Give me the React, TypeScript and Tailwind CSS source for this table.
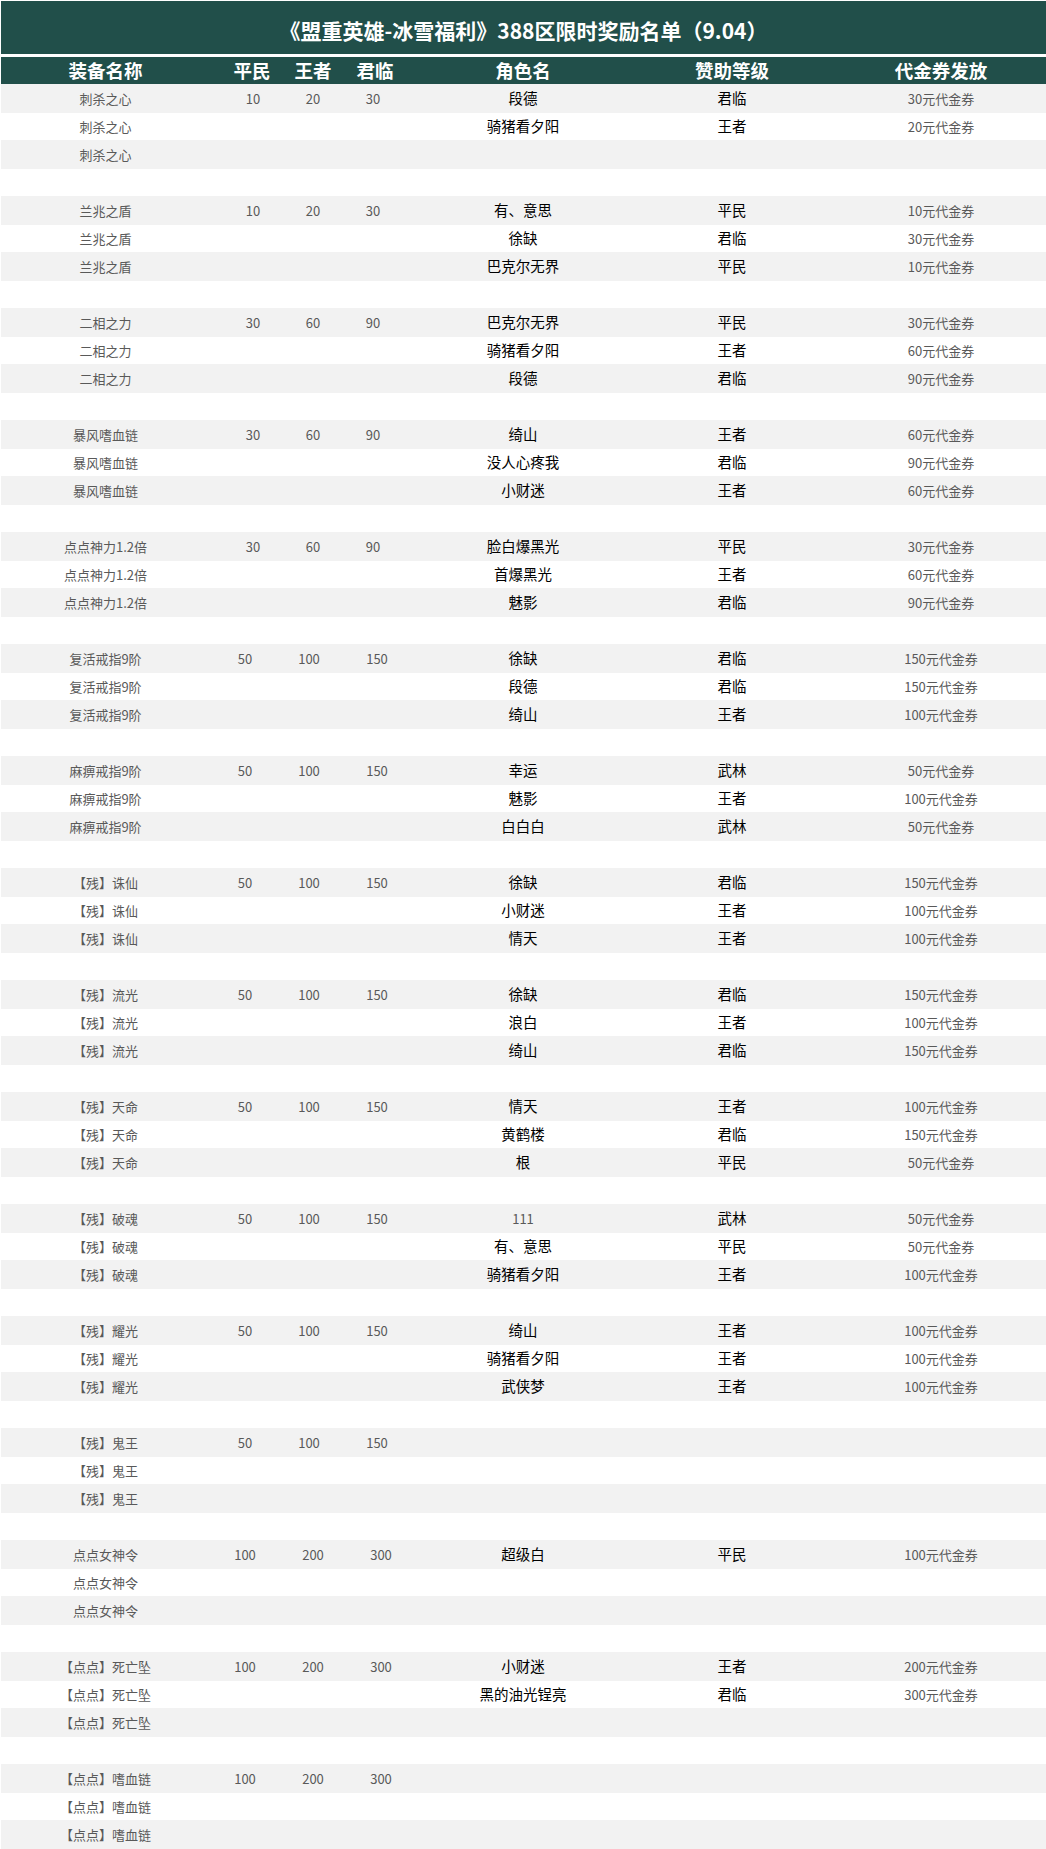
import React from "react";

type NumType = "a" | "b" | "c";
type Row = { item: string; nums?: [string, string, string]; numType?: NumType; name?: string; level?: string; voucher?: string };
type Group = { item: string; nums: [string, string, string]; numType: NumType; rows: [string, string, string][] };

const groups: Group[] = [
  { item: "刺杀之心", nums: ["10", "20", "30"], numType: "a", rows: [["段德", "君临", "30元代金券"], ["骑猪看夕阳", "王者", "20元代金券"], ["", "", ""]] },
  { item: "兰兆之盾", nums: ["10", "20", "30"], numType: "a", rows: [["有、意思", "平民", "10元代金券"], ["徐缺", "君临", "30元代金券"], ["巴克尔无界", "平民", "10元代金券"]] },
  { item: "二相之力", nums: ["30", "60", "90"], numType: "a", rows: [["巴克尔无界", "平民", "30元代金券"], ["骑猪看夕阳", "王者", "60元代金券"], ["段德", "君临", "90元代金券"]] },
  { item: "暴风嗜血链", nums: ["30", "60", "90"], numType: "a", rows: [["绮山", "王者", "60元代金券"], ["没人心疼我", "君临", "90元代金券"], ["小财迷", "王者", "60元代金券"]] },
  { item: "点点神力1.2倍", nums: ["30", "60", "90"], numType: "a", rows: [["脸白爆黑光", "平民", "30元代金券"], ["首爆黑光", "王者", "60元代金券"], ["魅影", "君临", "90元代金券"]] },
  { item: "复活戒指9阶", nums: ["50", "100", "150"], numType: "b", rows: [["徐缺", "君临", "150元代金券"], ["段德", "君临", "150元代金券"], ["绮山", "王者", "100元代金券"]] },
  { item: "麻痹戒指9阶", nums: ["50", "100", "150"], numType: "b", rows: [["幸运", "武林", "50元代金券"], ["魅影", "王者", "100元代金券"], ["白白白", "武林", "50元代金券"]] },
  { item: "【残】诛仙", nums: ["50", "100", "150"], numType: "b", rows: [["徐缺", "君临", "150元代金券"], ["小财迷", "王者", "100元代金券"], ["情天", "王者", "100元代金券"]] },
  { item: "【残】流光", nums: ["50", "100", "150"], numType: "b", rows: [["徐缺", "君临", "150元代金券"], ["浪白", "王者", "100元代金券"], ["绮山", "君临", "150元代金券"]] },
  { item: "【残】天命", nums: ["50", "100", "150"], numType: "b", rows: [["情天", "王者", "100元代金券"], ["黄鹤楼", "君临", "150元代金券"], ["根", "平民", "50元代金券"]] },
  { item: "【残】破魂", nums: ["50", "100", "150"], numType: "b", rows: [["111", "武林", "50元代金券"], ["有、意思", "平民", "50元代金券"], ["骑猪看夕阳", "王者", "100元代金券"]] },
  { item: "【残】耀光", nums: ["50", "100", "150"], numType: "b", rows: [["绮山", "王者", "100元代金券"], ["骑猪看夕阳", "王者", "100元代金券"], ["武侠梦", "王者", "100元代金券"]] },
  { item: "【残】鬼王", nums: ["50", "100", "150"], numType: "b", rows: [["", "", ""], ["", "", ""], ["", "", ""]] },
  { item: "点点女神令", nums: ["100", "200", "300"], numType: "c", rows: [["超级白", "平民", "100元代金券"], ["", "", ""], ["", "", ""]] },
  { item: "【点点】死亡坠", nums: ["100", "200", "300"], numType: "c", rows: [["小财迷", "王者", "200元代金券"], ["黑的油光锃亮", "君临", "300元代金券"], ["", "", ""]] },
  { item: "【点点】嗜血链", nums: ["100", "200", "300"], numType: "c", rows: [["", "", ""], ["", "", ""], ["", "", ""]] },
];

const GRID = "grid grid-cols-[209px_208px_210px_208px_1fr]";
const FONT = "font-['Noto_Sans_CJK_SC','Noto_Sans',sans-serif]";

function Nums({ nums, t }: { nums: [string, string, string]; t: NumType }) {
  const cls = "flex items-center justify-center whitespace-nowrap";
  if (t === "a")
    return (
      <div className="flex pl-[13px]">
        <div className={`${cls} w-[60px]`}>{nums[0]}</div>
        <div className={`${cls} w-[60px]`}>{nums[1]}</div>
        <div className={`${cls} w-[60px]`}>{nums[2]}</div>
      </div>
    );
  if (t === "b")
    return (
      <div className="flex pl-[5px]">
        <div className={`${cls} w-[60px]`}>{nums[0]}</div>
        <div className={`${cls} w-[68px]`}>{nums[1]}</div>
        <div className={`${cls} w-[68px]`}>{nums[2]}</div>
      </div>
    );
  return (
    <div className="flex pl-[1px]">
      <div className={`${cls} w-[68px]`}>{nums[0]}</div>
      <div className={`${cls} w-[68px]`}>{nums[1]}</div>
      <div className={`${cls} w-[68px]`}>{nums[2]}</div>
    </div>
  );
}

function DataRow({ row, gray }: { row: Row; gray: boolean }) {
  const isNum = row.name !== undefined && /^\d+$/.test(row.name);
  return (
    <div className={`${GRID} ${gray ? "h-[29px] bg-[#f2f2f2]" : "h-[27px] bg-white"} items-center leading-none`}>
      <div className="flex justify-center text-[13px] text-[#595959] whitespace-nowrap">{row.item}</div>
      <div className="text-[13px] text-[#595959]">{row.nums ? <Nums nums={row.nums} t={row.numType!} /> : null}</div>
      <div
        className={`flex justify-center whitespace-nowrap ${isNum ? "text-[13px] text-[#595959]" : "text-[14.5px] text-black"}`}
      >
        {row.name}
      </div>
      <div className="flex justify-center text-[14.5px] text-black whitespace-nowrap">{row.level}</div>
      <div className="flex justify-center text-[13px] text-[#595959] whitespace-nowrap">{row.voucher}</div>
    </div>
  );
}

export default function App() {
  const out: React.ReactNode[] = [];
  groups.forEach((g, gi) => {
    g.rows.forEach((r, ri) => {
      const row: Row = { item: g.item, name: r[0], level: r[1], voucher: r[2] };
      if (ri === 0) {
        row.nums = g.nums;
        row.numType = g.numType;
      }
      out.push(<DataRow key={`${gi}-${ri}`} row={row} gray={ri !== 1} />);
    });
    if (gi < groups.length - 1) out.push(<div key={`sp-${gi}`} className="h-[27px] bg-white" />);
  });

  return (
    <div className={`${FONT} w-[1046px] bg-white pt-[1px] pl-[1px]`}>
      <div className="flex h-[53px] items-center justify-center bg-[#214f4a] pt-[5px] text-[21px] font-bold leading-none text-white">
        《盟重英雄-冰雪福利》388区限时奖励名单（9.04）
      </div>
      <div className="h-[3px] bg-white" />
      <div className={`${GRID} h-[27px] items-center bg-[#214f4a] text-[18.5px] font-bold leading-none text-white`}>
        <div className="flex justify-center">装备名称</div>
        <div className="flex pl-[12px]">
          <div className="flex w-[60px] justify-center whitespace-nowrap">平民</div>
          <div className="flex w-[62px] justify-center whitespace-nowrap">王者</div>
          <div className="flex w-[62px] justify-center whitespace-nowrap">君临</div>
        </div>
        <div className="flex justify-center">角色名</div>
        <div className="flex justify-center">赞助等级</div>
        <div className="flex justify-center">代金券发放</div>
      </div>
      {out}
    </div>
  );
}
